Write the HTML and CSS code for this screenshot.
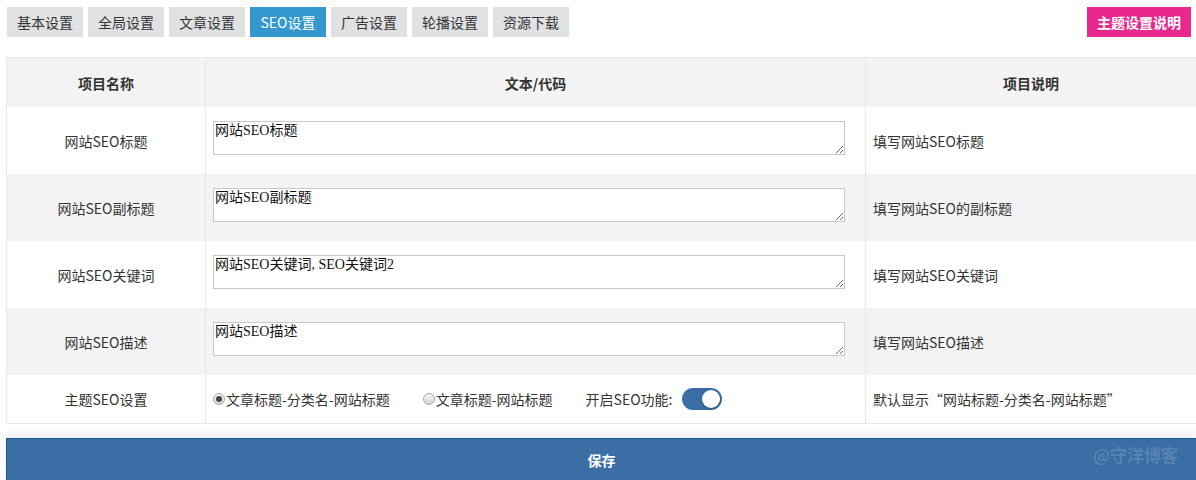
FILE: index.html
```html
<!DOCTYPE html>
<html lang="zh-CN">
<head>
    <meta charset="UTF-8">
    <title>SEO设置</title>
    <link rel="stylesheet" href="styles.css">
</head>
<body>
<div class="theme-panel">
    <div class="tab-bar">
        <ul class="tab-list">
            <li>基本设置</li>
            <li>全局设置</li>
            <li>文章设置</li>
            <li class="on-tab">SEO设置</li>
            <li>广告设置</li>
            <li>轮播设置</li>
            <li>资源下载</li>
        </ul>
        <a class="help-btn">主题设置说明</a>
    </div>

    <table class="opt-table">
        <thead>
        <tr>
            <th class="col-name">项目名称</th>
            <th class="col-value">文本/代码</th>
            <th class="col-desc">项目说明</th>
        </tr>
        </thead>
        <tbody>
        <tr>
            <td class="col-name">网站SEO标题</td>
            <td class="col-value"><textarea>网站SEO标题</textarea></td>
            <td class="col-desc">填写网站SEO标题</td>
        </tr>
        <tr class="gray-row">
            <td class="col-name">网站SEO副标题</td>
            <td class="col-value"><textarea>网站SEO副标题</textarea></td>
            <td class="col-desc">填写网站SEO的副标题</td>
        </tr>
        <tr>
            <td class="col-name">网站SEO关键词</td>
            <td class="col-value"><textarea>网站SEO关键词, SEO关键词2</textarea></td>
            <td class="col-desc">填写网站SEO关键词</td>
        </tr>
        <tr class="gray-row">
            <td class="col-name">网站SEO描述</td>
            <td class="col-value"><textarea>网站SEO描述</textarea></td>
            <td class="col-desc">填写网站SEO描述</td>
        </tr>
        <tr class="short-row">
            <td class="col-name">主题SEO设置</td>
            <td class="col-value">
                <div class="seo-opts">
                    <label class="radio-item"><input type="radio" name="seo_mode" checked>文章标题-分类名-网站标题</label>
                    <label class="radio-item"><input type="radio" name="seo_mode">文章标题-网站标题</label>
                    <span class="switch-label">开启SEO功能:</span>
                    <span class="switch on"><i></i></span>
                </div>
            </td>
            <td class="col-desc">默认显示“网站标题-分类名-网站标题”</td>
        </tr>
        </tbody>
    </table>

    <div class="save-bar">
        <span class="save-text">保存</span>
        <span class="watermark">@守洋博客</span>
    </div>
</div>
</body>
</html>
```

FILE: styles.css
```css
html, body {
    margin: 0;
    padding: 0;
    overflow: hidden;
}

body {
    font-family: "Noto Sans CJK SC", "Noto Sans", sans-serif;
    font-size: 14px;
    color: #333;
    background-color: #fff;
}

.theme-panel {
    width: 1191px;
    padding: 7px 0 0 6px;
}

.tab-bar {
    display: flex;
    justify-content: space-between;
    align-items: center;
    width: 1185px;
}

.tab-list {
    list-style: none;
    margin: 0;
    padding: 0 0 0 1px;
    display: flex;
    gap: 5px;
}

.tab-list > li {
    height: 30px;
    line-height: 30px;
    padding: 0 10px;
    min-width: 56px;
    text-align: center;
    font-size: 14px;
    background-color: #e0e1e3;
    color: #333;
    cursor: pointer;
}

.tab-list > li.on-tab {
    background-color: #3498cf;
    color: #fff;
}

.help-btn {
    display: block;
    height: 30px;
    line-height: 30px;
    padding: 0 10px;
    font-size: 14px;
    font-weight: bold;
    color: #fff;
    background-color: #e9288d;
    cursor: pointer;
}

.opt-table {
    width: 1191px;
    margin-top: 20px;
    border-collapse: collapse;
    border: 1px solid #e8e8e8;
    table-layout: fixed;
}

.opt-table th,
.opt-table td {
    border-left: 1px solid #e8e8e8;
    border-right: 1px solid #e8e8e8;
    padding: 0 7px;
}

.opt-table th {
    height: 49px;
    background-color: #f3f3f3;
    font-size: 14px;
    font-weight: bold;
    text-align: center;
}

.opt-table td {
    height: 67px;
}

.opt-table .col-name {
    width: 184px;
    text-align: center;
}

.opt-table .col-value {
    width: 645px;
}

.opt-table th.col-desc {
    text-align: center;
}

.gray-row {
    background-color: #f3f3f3;
}

.short-row td {
    height: 48px;
}

.opt-table textarea {
    display: block;
    box-sizing: border-box;
    width: 632px;
    height: 34px;
    margin: 0 0 6px;
    padding: 1px 1px;
    border: 1px solid #c8c8c8;
    font-family: "Liberation Serif", "Noto Sans CJK SC", serif;
    font-size: 14px;
    line-height: 16px;
    color: #111;
    background-color: #fff;
    resize: vertical;
}

.seo-opts {
    display: flex;
    align-items: center;
}

.radio-item {
    display: flex;
    align-items: center;
    margin-right: 33px;
}

.radio-item input {
    appearance: none;
    -webkit-appearance: none;
    box-sizing: border-box;
    width: 12px;
    height: 12px;
    margin: 0 1px 0 0;
    border: 1px solid #a8a8a8;
    border-radius: 50%;
    background: linear-gradient(#f4f4f4, #d8d8d8);
    position: relative;
}

.radio-item input:checked::after {
    content: "";
    position: absolute;
    top: 2px;
    left: 2px;
    width: 6px;
    height: 6px;
    border-radius: 50%;
    background-color: #444;
}

.switch-label {
    margin-right: 10px;
}

.switch {
    display: inline-block;
    position: relative;
    width: 40px;
    height: 22px;
    border-radius: 11px;
    background-color: #3a6ea5;
}

.switch > i {
    position: absolute;
    top: 2px;
    right: 2px;
    width: 18px;
    height: 18px;
    border-radius: 50%;
    background-color: #fff;
    box-shadow: 0 1px 2px rgba(0, 0, 0, 0.3);
}

.save-bar {
    position: relative;
    margin-top: 14px;
    width: 1191px;
    height: 44px;
    box-sizing: border-box;
    border: 1px solid #155c94;
    background-color: #3a6ea5;
    box-shadow: 0 -6px 8px rgba(0, 0, 0, 0.06);
    display: flex;
    align-items: center;
    justify-content: center;
}

.save-text {
    color: #fff;
    font-size: 14px;
    font-weight: bold;
}

.watermark {
    position: absolute;
    left: 1086px;
    top: 3px;
    font-size: 17px;
    font-weight: bold;
    color: #5783b3;
}
```
